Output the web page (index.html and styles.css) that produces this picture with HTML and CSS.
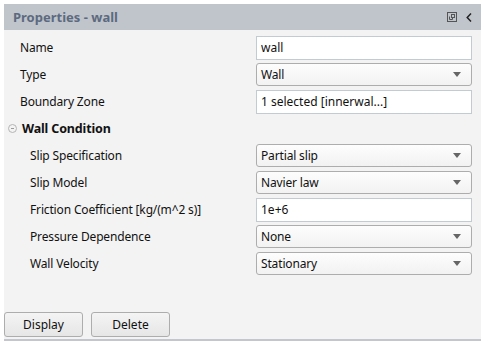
FILE: index.html
```html
<!DOCTYPE html>
<html lang="en">
<head>
    <meta charset="UTF-8">
    <meta name="viewport" content="width=device-width, initial-scale=1.0">
    <title>Properties - wall</title>
    <link rel="stylesheet" href="styles.css">
</head>
<body>
    <div class="panel">
        <div class="panel-header">
            <span class="panel-title">Properties - wall</span>
            <span class="header-icons">
                <svg width="10" height="10" viewBox="0 0 10 10">
                    <rect x="0.5" y="0.5" width="9" height="9" fill="none" stroke="#555" />
                    <rect x="4.5" y="2.5" width="3" height="3" fill="none" stroke="#555" />
                    <path d="M2.5 4.5 V7.5 H5.5 V5.5" fill="none" stroke="#555" />
                </svg>
                <svg width="6" height="9" viewBox="0 0 6 9">
                    <path d="M5 0.5 L1.2 4.5 L5 8.5" fill="none" stroke="#222" stroke-width="1.5" />
                </svg>
            </span>
        </div>

        <div class="props">
            <div class="row">
                <div class="label">Name</div>
                <input class="field" type="text" value="wall">
            </div>
            <div class="row">
                <div class="label">Type</div>
                <div class="combo"><span>Wall</span><i class="arrow"></i></div>
            </div>
            <div class="row">
                <div class="label">Boundary Zone</div>
                <input class="field" type="text" value="1 selected [innerwal...]">
            </div>
            <div class="row">
                <div class="label group"><i class="collapse"></i>Wall Condition</div>
            </div>
            <div class="row">
                <div class="label sub">Slip Specification</div>
                <div class="combo"><span>Partial slip</span><i class="arrow"></i></div>
            </div>
            <div class="row">
                <div class="label sub">Slip Model</div>
                <div class="combo"><span>Navier law</span><i class="arrow"></i></div>
            </div>
            <div class="row">
                <div class="label sub">Friction Coefficient [kg/(m^2 s)]</div>
                <input class="field" type="text" value="1e+6">
            </div>
            <div class="row">
                <div class="label sub">Pressure Dependence</div>
                <div class="combo"><span>None</span><i class="arrow"></i></div>
            </div>
            <div class="row">
                <div class="label sub">Wall Velocity</div>
                <div class="combo"><span>Stationary</span><i class="arrow"></i></div>
            </div>
        </div>

        <div class="actions">
            <button class="btn">Display</button>
            <button class="btn">Delete</button>
        </div>
    </div>
</body>
</html>
```

FILE: styles.css
```css
body {
    margin: 0;
    background: #fff;
    font-family: "Noto Sans", "Open Sans", sans-serif;
    font-size: 12px;
    letter-spacing: -0.15px;
    color: #111;
}
.panel {
    margin: 4px 0 0 4px;
    height: 337px;
    box-sizing: border-box;
    background: #f3f3f3;
    border-bottom: 2px solid #c3c7cd;
    display: flex;
    flex-direction: column;
}
.panel-header {
    height: 26px;
    background: #c0c5cc;
    display: flex;
    align-items: center;
    justify-content: space-between;
    padding: 0 9px 0 9px;
}
.panel-title {
    font-weight: bold;
    font-size: 13px;
    letter-spacing: 0;
    color: #5c6a7f;
}
.header-icons {
    display: flex;
    align-items: center;
    gap: 9px;
}
.props {
    padding: 4px 9px 0 0;
}
.row {
    height: 27px;
    display: grid;
    grid-template-columns: 1fr 216px;
    align-items: center;
}
.label {
    padding-left: 16px;
    white-space: nowrap;
}
.label.sub {
    padding-left: 26px;
}
.label.group {
    padding-left: 4px;
    font-weight: bold;
    font-size: 12.5px;
    display: flex;
    align-items: center;
    gap: 5px;
}
.collapse {
    width: 7px;
    height: 7px;
    border: 1px solid #b5b5b5;
    border-radius: 50%;
    position: relative;
}
.collapse::after {
    content: "";
    position: absolute;
    left: 2px;
    top: 3px;
    width: 3px;
    height: 1px;
    background: #999;
}
.field {
    height: 24px;
    box-sizing: border-box;
    border: 1px solid #c2cad2;
    background: #fff;
    padding: 0 4px;
    font: inherit;
    color: #111;
    outline: none;
}
.combo {
    height: 23px;
    box-sizing: border-box;
    border: 1px solid #adadad;
    border-radius: 3px;
    background: linear-gradient(#fdfdfd, #f2f2f2);
    display: flex;
    align-items: center;
    justify-content: space-between;
    padding: 0 10px 0 4px;
}
.arrow {
    width: 0;
    height: 0;
    border-left: 4.5px solid transparent;
    border-right: 4.5px solid transparent;
    border-top: 5px solid #666;
}
.actions {
    margin-top: auto;
    padding-bottom: 2px;
    display: flex;
    gap: 8px;
}
.btn {
    width: 79px;
    height: 25px;
    border: 1px solid #adadad;
    border-radius: 3px;
    background: linear-gradient(#f4f4f4, #e6e6e6);
    font: inherit;
    color: #111;
    padding: 0;
}
```
